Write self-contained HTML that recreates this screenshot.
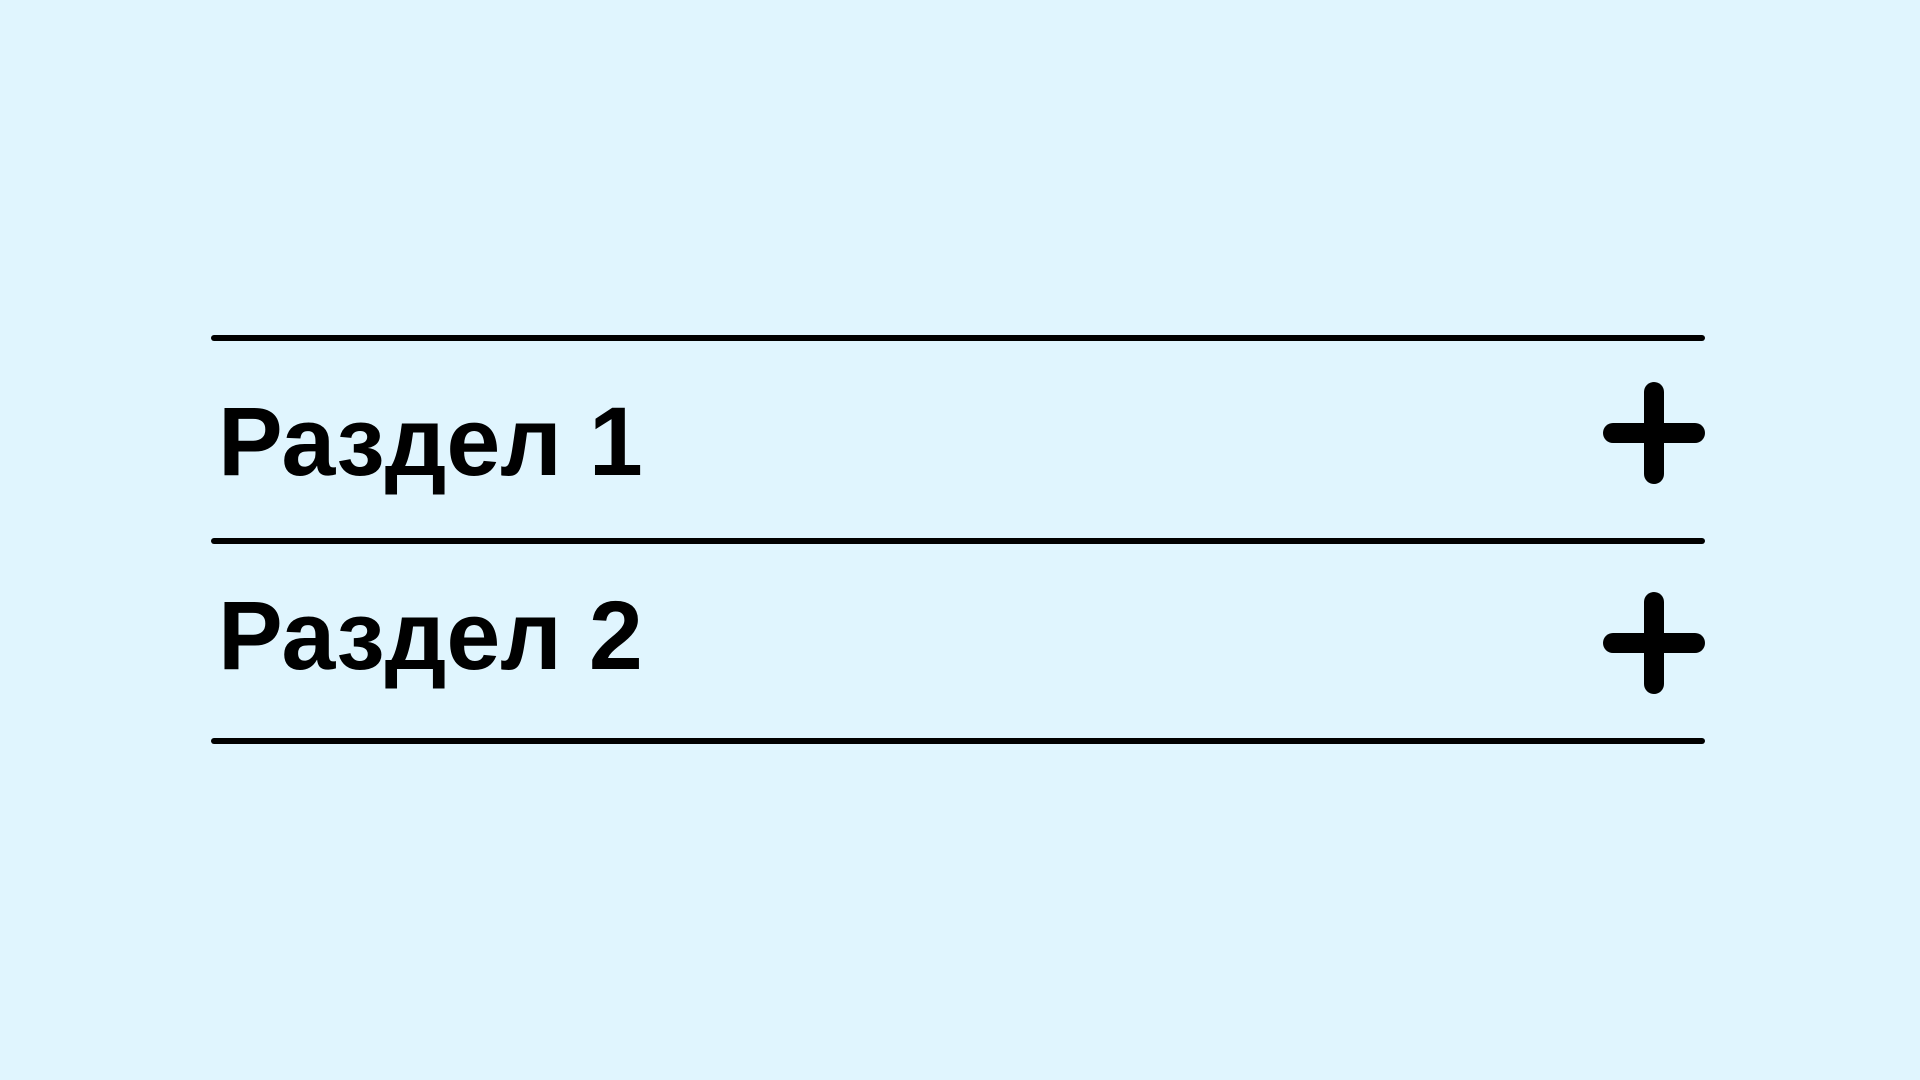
<!DOCTYPE html>
<html><head><meta charset="utf-8"><style>
html,body{margin:0;padding:0;width:1920px;height:1080px;background:#e0f5fe;overflow:hidden}
.l{position:absolute;left:211px;width:1494px;height:6px;background:#000;border-radius:3px}
.t{position:absolute;left:218px;font:bold 97px "Liberation Sans",Arial,sans-serif;color:#000;line-height:1}
.p{position:absolute;width:102px;height:102px}
.p:before,.p:after{content:"";position:absolute;background:#000;border-radius:10px}
.p:before{left:0;top:41px;width:102px;height:20px}
.p:after{top:0;left:41px;height:102px;width:20px}
</style></head><body>
<div class="l" style="top:335px"></div>
<div class="l" style="top:538px"></div>
<div class="l" style="top:738px"></div>
<div class="t" style="top:393px">Раздел 1</div>
<div class="t" style="top:587px">Раздел 2</div>
<div class="p" style="left:1603px;top:382px"></div>
<div class="p" style="left:1603px;top:592px"></div>
</body></html>
